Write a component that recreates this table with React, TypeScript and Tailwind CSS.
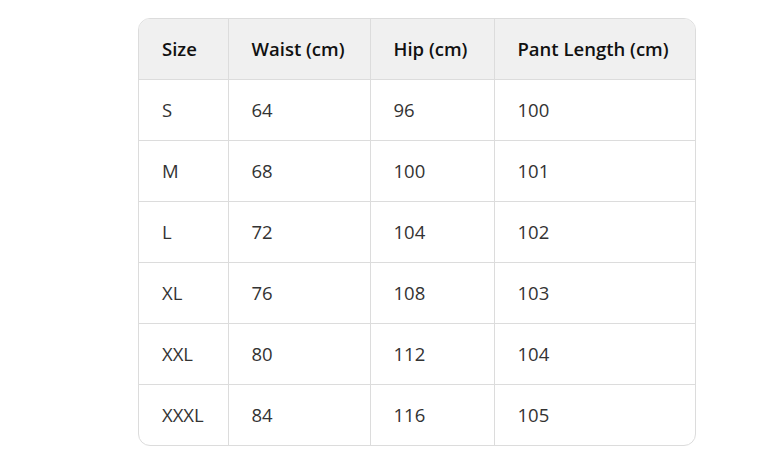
const rows = [
  ['S', '64', '96', '100'],
  ['M', '68', '100', '101'],
  ['L', '72', '104', '102'],
  ['XL', '76', '108', '103'],
  ['XXL', '80', '112', '104'],
  ['XXXL', '84', '116', '105'],
]

const heads = ['Size', 'Waist (cm)', 'Hip (cm)', 'Pant Length (cm)']

export default function App() {
  return (
    <div className="w-[776px] h-[465px] bg-white pt-[18px] pl-[138px]" style={{ fontFamily: '"Open Sans", "Noto Sans", sans-serif' }}>
      <div className="w-[558px] rounded-[12px] border border-[#dcdcdc] overflow-hidden">
        <table className="w-full border-collapse text-[18.5px]">
          <thead>
            <tr className="bg-[#f0f0f0] h-[60px]">
              {heads.map((h, i) => (
                <th
                  key={h}
                  className={
                    'text-left font-semibold text-[#111] pl-[23px] border-b border-[#dcdcdc] ' +
                    (i < 3 ? 'border-r ' : '') +
                    (i === 0 ? 'w-[89px]' : i === 1 ? 'w-[142px]' : i === 2 ? 'w-[124px]' : '')
                  }
                >
                  {h}
                </th>
              ))}
            </tr>
          </thead>
          <tbody>
            {rows.map((r, ri) => (
              <tr key={r[0]} className="h-[61px]">
                {r.map((c, i) => (
                  <td
                    key={i}
                    className={
                      'pl-[23px] text-[#333] border-[#dcdcdc] ' +
                      (ri < rows.length - 1 ? 'border-b ' : '') +
                      (i < 3 ? 'border-r' : '')
                    }
                  >
                    {c}
                  </td>
                ))}
              </tr>
            ))}
          </tbody>
        </table>
      </div>
    </div>
  )
}
